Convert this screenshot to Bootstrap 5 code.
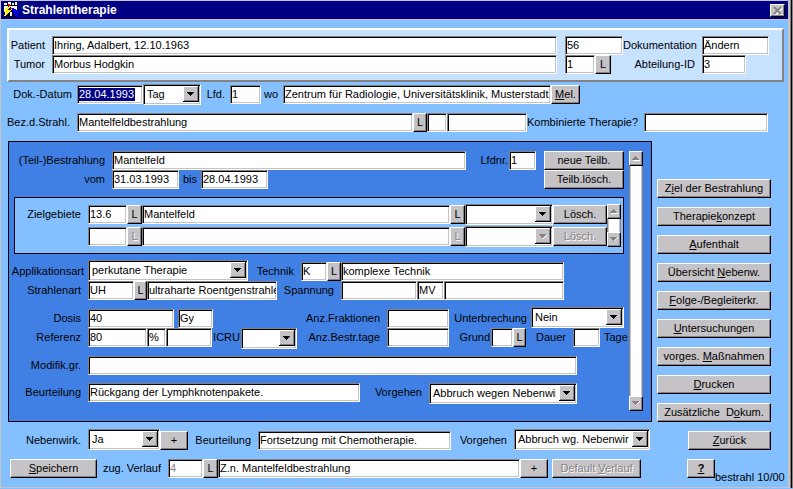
<!DOCTYPE html>
<html lang="de">
<head>
<meta charset="utf-8">
<meta name="viewport" content="width=device-width, initial-scale=1">
<title>Strahlentherapie</title>
<link href="https://cdn.jsdelivr.net/npm/bootstrap@5.3.0/dist/css/bootstrap.min.css" rel="stylesheet">
<style>
:root{--sky:#84c0ff;--pale:#c6e2ff;--deep:#4080e4;--face:#c6c3c6;--shade:#848284;--navy:#000084}
body{font:11px/13px "Liberation Sans",Arial,sans-serif;color:#000}
.win{border:1px solid var(--face);border-right:2px solid var(--face);border-bottom-width:1px;margin-right:3px;min-height:calc(100vh - 1px);position:relative}
.backdrop{background:linear-gradient(90deg,var(--shade) 1px,#000 1px 2px,var(--shade) 2px) right/3px 100% no-repeat,linear-gradient(var(--shade),var(--shade)) bottom/100% 1px no-repeat var(--sky)}
.titlebar{background:var(--navy);color:#fff;height:19px;border-bottom:1px solid var(--face);font-size:12px;font-weight:700;padding:0 3px 0 2px}
.titlebar .caption{margin:0 auto 0 3px;font-size:12px;line-height:16px;font-weight:700}
.line{display:grid;align-items:center}
.line.low{align-items:end}
.line.high{align-items:start}
.line label,.tag{text-align:right;padding-right:7px;white-space:nowrap;line-height:19px}
.line label.tight{padding-right:1px}
.fld{display:block;width:100%;min-width:0;height:19px;padding:0 0 1px 1px;font:inherit;color:#000;background-color:#fff;border:1px solid;border-color:var(--shade) #fff #fff var(--shade);border-radius:0;box-shadow:inset 1px 1px #000,inset -1px -1px var(--face);outline:0}
.fld:disabled{color:var(--shade)}
.fld:focus{outline:1px dotted #000}
.fld.picked{background:#fff linear-gradient(var(--navy),var(--navy)) 1px 2px/56px 13px no-repeat;color:#fff}
.combo{position:relative;height:21px;min-width:0}
.combo select{appearance:none;display:block;width:100%;height:100%;padding:0 20px 0 3px;font:inherit;color:#000;background:#fff;border:1px solid;border-color:var(--shade) #fff #fff var(--shade);border-radius:0;box-shadow:inset 1px 1px #000,inset -1px -1px var(--face);outline:0;opacity:1}
.combo svg{position:absolute;right:2px;top:2px;width:16px;height:16px;pointer-events:none}
.push,.btn.push{display:block;height:19px;padding:0 0 1px;min-width:0;font:inherit;line-height:15px;color:#000;background:var(--face);border:1px solid;border-color:#fff #000 #000 #fff;border-radius:0;box-shadow:inset -1px -1px var(--shade);white-space:nowrap;overflow:hidden}
.btn.push:disabled{color:var(--shade);text-shadow:1px 1px #fff;opacity:1}
.btn.push svg{display:block;margin:auto}
.btn.close-win{width:15px;height:13px;padding:0}
.patient{margin:8px 4px 0 6px;padding:6px 13px 6px 0;background:var(--pale);border:2px solid;border-color:#fff var(--shade) var(--shade) #fff}
.g-patient{grid-template-columns:43px 1fr 66px 79px 67px}
.g-tumor{grid-template-columns:43px 1fr 38px 16px 91px 44px 23px}
.g-datum{grid-template-columns:76px 66px 58px 29px 31px 22px 1fr 29px;padding-right:208px;margin-top:2px}
.g-datum label{padding-right:5px}
.g-bez{grid-template-columns:76px 1fr 14px 20px 80px 117px 124px;padding-right:20px;margin-top:8px}
.middle{margin:9px 17px 0 7px;gap:5px}
.course{background:var(--deep);border:1px solid #000;padding:9px 8px 10px 0;gap:5px}
.g-teil{grid-template-columns:103px 1fr 43px 27px 88px}
.g-vom{grid-template-columns:103px 67px 22px 67px 1fr 80px}
.targets{background:var(--sky);border:1px solid #000;margin:8px 0 0 5px;padding:6px 2px 6px 0}
.g-ziel{grid-template-columns:73px 39px 15px 1fr 15px 88px 54px;row-gap:1px}
.g-appl{grid-template-columns:79px 160px 53px 26px 14px 1fr;padding-right:60px;margin-top:6px}
.g-strahl{grid-template-columns:79px 46px 13px 130px 64px 76px 27px 1fr;padding-right:60px}
.g-dosis{grid-template-columns:79px 86px 39px 1fr 62px 82px 93px;margin-top:7px}
.g-ref{grid-template-columns:79px 59px 19px 46px 29px 56px 1fr 62px 42px 22px 13px 47px 27px 24px}
.g-mod{grid-template-columns:79px 1fr;padding-right:47px;margin-top:7px}
.g-beurt{grid-template-columns:79px 1fr 69px 148px;padding-right:47px;margin-top:8px}
.g-neben{grid-template-columns:87px 72px 28px 70px 1fr 63px 136px 121px;padding-right:17px;margin-top:7px}
.g-save{grid-template-columns:87px 71px 35px 15px 1fr 28px 93px 74px 73px;padding-left:9px;margin-top:9px}
.back-cell{padding-left:38px}
.help-cell{padding-left:46px}
.wheel{width:14px;flex:none;background:#fff;border:1px solid var(--shade);border-width:0 1px;box-shadow:inset 1px 0 var(--face),inset -1px 0 var(--face)}
.wheel .push{width:14px;height:15px;margin:0 -1px;flex:none}
.entry{padding-bottom:7px}
.menu{width:114px;flex:none;gap:9px;justify-content:flex-end}
.version{padding-top:12px;line-height:13px;white-space:nowrap}
</style>
<script src="https://cdn.jsdelivr.net/npm/bootstrap@5.3.0/dist/js/bootstrap.bundle.min.js"></script>
</head>
<body class="backdrop">
<svg class="d-none" aria-hidden="true">
  <symbol id="drop" viewBox="0 0 16 16"><path fill="#c6c3c6" d="M0 0h16v16H0z"/><path fill="#fff" d="M0 0h15v1H1v14H0z"/><path fill="#848284" d="M15 1v14H1v-1h13V1z"/><path d="M15 0h1v16H0v-1h15zM4 6h7v1h-1v1H9v1H8v1H7V9H6V8H5V7H4z"/></symbol>
  <symbol id="drop-off" viewBox="0 0 16 16"><path fill="#c6c3c6" d="M0 0h16v16H0z"/><path fill="#fff" d="M0 0h15v1H1v14H0zM11 7h1v1h-1v1h-1v1H9v1H8v-1h1V9h1V8h1z"/><path d="M15 0h1v16H0v-1h15z"/><path fill="#848284" d="M14 1h1v14H1v-1h13zM4 6h7v1h-1v1H9v1H8v1H7V9H6V8H5V7H4z"/></symbol>
  <symbol id="up" viewBox="0 0 8 6"><path fill="#fff" d="M1 5h7v1H1z"/><path fill="#848284" d="M3 1h1v1h1v1h1v1h1v1H0V4h1V3h1V2h1z"/></symbol>
  <symbol id="down" viewBox="0 0 8 6"><path fill="#fff" d="M7 1h1v1H7v1H6v1H5v1H4V4h1V3h1V2h1z"/><path fill="#848284" d="M0 1h7v1H6v1H5v1H4v1H3V4H2V3H1V2H0z"/></symbol>
</svg>
<div class="win d-flex flex-column">
  <header class="titlebar d-flex align-items-center">
    <svg width="16" height="16" viewBox="0 0 16 16" shape-rendering="crispEdges" aria-hidden="true">
      <path fill="#000" d="M1 1h13v14H1z"/>
      <path fill="#fff" d="M1 1h3v2H1zM5 0h3v3H5zM9 1h2v2H9zM12 0h2v3h-2zM1 4h4v4H1zM8 4h6v4H8zM2 10h2v3H2zM7 10h2v4H7z"/>
      <path fill="#ff0" d="M6 4h2v1H7v1H6v1H5v1h3v1H7v1H6v1H5v1H4v1H3v1H1v-1h1v-1h1v-1h1v-1H1V8h1V7h1V6h1V5h2z"/>
      <path fill="#f00" d="M5 2h2v2H5zM7 6h2v1H7z"/>
      <path fill="#0000e8" d="M9 6h2v1h2v1h2v1h1v2h-2v2h1v2h-3v-2h-1v-1h-1V9H9z"/>
    </svg>
    <h1 class="caption">Strahlentherapie</h1>
    <button class="btn push close-win" type="button" aria-label="Schließen"><svg width="11" height="9" viewBox="0 0 11 9"><path d="M2 1l7 7M9 1L2 8" transform="translate(1 1)" stroke="#fff" stroke-width="2"/><path d="M2 1l7 7M9 1L2 8" stroke="#848284" stroke-width="2"/></svg></button>
  </header>

  <section class="patient">
    <div class="line g-patient">
      <label for="pat">Patient</label><input class="fld" id="pat" value="Ihring, Adalbert, 12.10.1963">
      <div class="ps-2"><input class="fld" aria-label="Patientennummer" value="56"></div>
      <label for="dok">Dokumentation</label><input class="fld" id="dok" value="Ändern">
    </div>
    <div class="line g-tumor">
      <label for="tum">Tumor</label><input class="fld" id="tum" value="Morbus Hodgkin">
      <div class="ps-2"><input class="fld" aria-label="Tumornummer" value="1"></div>
      <button class="btn push" type="button">L</button>
      <label for="abt">Abteilung-ID</label><input class="fld" id="abt" value="3">
    </div>
  </section>

  <div class="line g-datum">
    <label for="dat">Dok.-Datum</label><input class="fld picked" id="dat" value="28.04.1993">
    <div class="combo"><select aria-label="Genauigkeit"><option>Tag</option></select><svg><use href="#drop"/></svg></div>
    <label for="lfd">Lfd.</label><input class="fld" id="lfd" value="1">
    <label for="wo">wo</label><input class="fld" id="wo" value="Zentrum für Radiologie, Universitätsklinik, Musterstadt">
    <button class="btn push" type="button"><u>M</u>el.</button>
  </div>

  <div class="line g-bez">
    <label for="bez">Bez.d.Strahl.</label><input class="fld" id="bez" value="Mantelfeldbestrahlung">
    <button class="btn push" type="button">L</button>
    <input class="fld" aria-label="Kürzel"><input class="fld" aria-label="Zusatz">
    <label for="komb">Kombinierte Therapie?</label><input class="fld" id="komb">
  </div>

  <div class="middle d-flex">
    <section class="course d-flex flex-fill">
      <div class="entry flex-fill">
        <div class="line g-teil">
          <label for="teil">(Teil-)Bestrahlung</label><input class="fld" id="teil" value="Mantelfeld">
          <label for="lfdnr" class="tight">Lfdnr.</label><input class="fld" id="lfdnr" value="1">
          <button class="btn push ms-2" type="button">neue Teilb.</button>
        </div>
        <div class="line g-vom">
          <label for="vom">vom</label><input class="fld" id="vom" value="31.03.1993">
          <label for="bis" class="pe-1">bis</label><input class="fld" id="bis" value="28.04.1993">
          <span></span><button class="btn push" type="button">Teilb.lösch.</button>
        </div>

        <div class="targets d-flex">
          <div class="line g-ziel flex-fill">
            <label for="z1">Zielgebiete</label><input class="fld" id="z1" value="13.6">
            <button class="btn push" type="button">L</button>
            <input class="fld" aria-label="Zielgebiet 1" value="Mantelfeld">
            <button class="btn push" type="button">L</button>
            <div class="combo"><select aria-label="Seite 1"><option></option></select><svg><use href="#drop"/></svg></div>
            <button class="btn push" type="button">Lösch.</button>
            <span></span><input class="fld" aria-label="Schlüssel 2">
            <button class="btn push" type="button" disabled>L</button>
            <input class="fld" aria-label="Zielgebiet 2">
            <button class="btn push" type="button" disabled>L</button>
            <div class="combo"><select aria-label="Seite 2" disabled><option></option></select><svg><use href="#drop-off"/></svg></div>
            <button class="btn push" type="button" disabled>Lösch.</button>
          </div>
          <div class="wheel d-flex flex-column justify-content-between">
            <button class="btn push" type="button" aria-label="Zielgebiete nach oben"><svg width="8" height="6"><use href="#up"/></svg></button>
            <button class="btn push" type="button" aria-label="Zielgebiete nach unten"><svg width="8" height="6"><use href="#down"/></svg></button>
          </div>
        </div>

        <div class="line low g-appl">
          <label for="appl" class="pe-1">Applikationsart</label>
          <div class="combo align-self-start"><select id="appl"><option>perkutane Therapie</option></select><svg><use href="#drop"/></svg></div>
          <label for="tech">Technik</label><input class="fld" id="tech" value="K">
          <button class="btn push" type="button">L</button><input class="fld" aria-label="Technik Text" value="komplexe Technik">
        </div>
        <div class="line g-strahl">
          <label for="sart">Strahlenart</label><input class="fld" id="sart" value="UH">
          <button class="btn push" type="button">L</button><input class="fld" aria-label="Strahlenart Text" value="ultraharte Roentgenstrahlen">
          <label for="spann">Spannung</label><input class="fld" id="spann">
          <input class="fld" aria-label="Einheit der Spannung" value="MV"><input class="fld" aria-label="Spannung Text">
        </div>

        <div class="line low g-dosis">
          <label for="dosis">Dosis</label><input class="fld" id="dosis" value="40">
          <div class="ps-1"><input class="fld" aria-label="Dosiseinheit" value="Gy"></div>
          <label for="frak">Anz.Fraktionen</label><input class="fld" id="frak">
          <label for="unter" class="pe-1">Unterbrechung</label>
          <div class="combo"><select id="unter"><option>Nein</option></select><svg><use href="#drop"/></svg></div>
        </div>
        <div class="line high g-ref">
          <label for="ref">Referenz</label><input class="fld" id="ref" value="80">
          <input class="fld" aria-label="Einheit" value="%"><input class="fld" aria-label="Referenz Text">
          <label for="icru" class="tight">ICRU</label>
          <div class="combo"><select id="icru"><option></option></select><svg><use href="#drop"/></svg></div>
          <label for="tage">Anz.Bestr.tage</label><input class="fld" id="tage">
          <label for="grund" class="tight">Grund</label><input class="fld" id="grund">
          <button class="btn push" type="button">L</button>
          <label for="dauer">Dauer</label><input class="fld" id="dauer">
          <span class="tag px-1">Tage</span>
        </div>

        <div class="line g-mod">
          <label for="mod">Modifik.gr.</label><input class="fld" id="mod">
        </div>
        <div class="line high g-beurt">
          <label for="beu1">Beurteilung</label><input class="fld" id="beu1" value="Rückgang der Lymphknotenpakete.">
          <label for="vor1">Vorgehen</label>
          <div class="combo"><select id="vor1"><option>Abbruch wegen Nebenwirkungen</option></select><svg><use href="#drop"/></svg></div>
        </div>
      </div>
      <div class="wheel d-flex flex-column justify-content-between">
        <button class="btn push" type="button" aria-label="Nach oben"><svg width="8" height="6"><use href="#up"/></svg></button>
        <button class="btn push" type="button" aria-label="Nach unten"><svg width="8" height="6"><use href="#down"/></svg></button>
      </div>
    </section>

    <nav class="menu d-flex flex-column" aria-label="Bereiche">
      <button class="btn push" type="button">Z<u>i</u>el der Bestrahlung</button>
      <button class="btn push" type="button">Therapie<u>k</u>onzept</button>
      <button class="btn push" type="button"><u>A</u>ufenthalt</button>
      <button class="btn push" type="button">Übersicht <u>N</u>ebenw.</button>
      <button class="btn push" type="button"><u>F</u>olge-/Begleiterkr.</button>
      <button class="btn push" type="button"><u>U</u>ntersuchungen</button>
      <button class="btn push" type="button">vorges. <u>M</u>aßnahmen</button>
      <button class="btn push" type="button"><u>D</u>rucken</button>
      <button class="btn push" type="button">Zusätzliche&nbsp; D<u>o</u>kum.</button>
    </nav>
  </div>

  <div class="line low g-neben">
    <label for="neb">Nebenwirk.</label>
    <div class="combo"><select id="neb"><option>Ja</option></select><svg><use href="#drop"/></svg></div>
    <button class="btn push" type="button">+</button>
    <label for="beu2">Beurteilung</label><input class="fld" id="beu2" value="Fortsetzung mit Chemotherapie.">
    <label for="vor2">Vorgehen</label>
    <div class="combo"><select id="vor2"><option>Abbruch wg. Nebenwirkungen</option></select><svg><use href="#drop"/></svg></div>
    <div class="back-cell d-grid"><button class="btn push" type="button"><u>Z</u>urück</button></div>
  </div>

  <div class="line high g-save">
    <button class="btn push" type="button"><u>S</u>peichern</button>
    <label for="verl">zug. Verlauf</label><input class="fld" id="verl" value="4" disabled>
    <button class="btn push" type="button">L</button><input class="fld" aria-label="Verlauf Text" value="Z.n. Mantelfeldbestrahlung">
    <button class="btn push" type="button">+</button>
    <div class="d-grid ps-1"><button class="btn push" type="button" disabled>Default <u>V</u>erlauf</button></div>
    <div class="help-cell d-grid"><button class="btn push fw-bold" type="button" aria-label="Hilfe"><u>?</u></button></div>
    <span class="version">bestrahl 10/00</span>
  </div>
</div>
</body>
</html>
